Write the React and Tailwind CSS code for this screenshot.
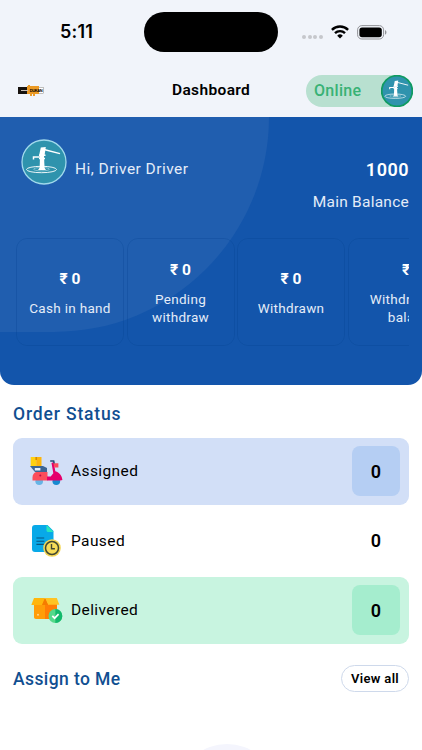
import React from 'react';

const stats = [
  { label: 'Cash in hand', width: 'w-[108px]' },
  { label: 'Pending withdraw', width: 'w-[108px]' },
  { label: 'Withdrawn', width: 'w-[108px]' },
  { label: 'Withdrawable balance', width: 'w-[130px]' },
];

const PumpAvatar = ({ className, stroke, strokeWidth }) => (
  <svg className={className} viewBox="0 0 46 46" fill="none">
    <circle cx="23" cy="23" r="22" fill="#2f93ad" stroke={stroke} strokeWidth={strokeWidth} />
    <ellipse cx="20.5" cy="30.5" rx="15" ry="3.2" stroke="#fff" strokeWidth="0.9" />
    <ellipse cx="20.5" cy="30.2" rx="8" ry="1.7" stroke="#d3edf2" strokeWidth="0.5" />
    <path d="M19 17h4l.6 13h-5z" fill="#fff" />
    <path d="M17 31h8l-1.5-2h-5z" fill="#fff" />
    <path d="M19.8 8.5 24.8 8l-1.2 8h-5.4z" fill="#fff" />
    <path d="M18 16.3h6.5M18 19.5h6" stroke="#fff" strokeWidth="1.4" />
    <path d="M19 18h-6.5v2.5" stroke="#fff" strokeWidth="1.5" />
    <path d="m23 10.5 16 4.2" stroke="#fff" strokeWidth="1.3" />
  </svg>
);

const ScooterIcon = () => (
  <svg className="h-[30px] w-[33px]" viewBox="0 0 33 30">
    <circle cx="9.2" cy="25.2" r="3.8" fill="#66b4e5" />
    <circle cx="26.3" cy="25.2" r="3.8" fill="#168ad1" />
    <rect x="0.7" y="1" width="5.5" height="9.5" fill="#ffd012" />
    <rect x="6.2" y="1" width="5.3" height="9.5" fill="#fdb50b" />
    <path d="M5.4 1h1.6v3H5.4z" fill="#d58b00" />
    <path d="M0 10h13l4 2v4H5z" fill="#3c6595" />
    <rect x="4.8" y="12" width="5.6" height="2.5" fill="#e5effb" />
    <path d="M6 16h11.5v8.5H2.5v-3c0-2.8 1.5-4.6 3.5-5.5z" fill="#fb4d5b" />
    <path d="m21.5 7 2.2-1 1.6 9.2c4.2 1.2 6.8 4.6 7.1 8.8l-2 .6H17v-4.2h3.7l2.6-3.2z" fill="#e5006b" />
    <path d="M20.2 5.1h3.5l.6 3.1" fill="none" stroke="#254b75" strokeWidth="1.5" />
    <path d="M23.4 7.2h5v4.3h-4z" fill="#fc495c" />
    <circle cx="10.3" cy="19.5" r="1" fill="#b90b49" />
  </svg>
);

const PausedIcon = () => (
  <svg className="ml-[1.5px] h-[33px] w-[30px]" viewBox="0 0 30 33">
    <path d="M3 1h12.5l6 6v21H3c-2 0-3-1-3-3V4c0-2 1-3 3-3z" fill="#08a9e8" />
    <path d="M14.5 1 21.5 8h-5c-1.4 0-2-.6-2-2z" fill="#29e7bc" />
    <path d="M4.4 14h7.8M4.4 17.2h8M4.4 20.4h7.6" stroke="#075681" strokeWidth="1.1" />
    <circle cx="20" cy="24" r="8.8" fill="#f4d653" />
    <circle cx="20" cy="24" r="6.5" fill="#f7dc58" stroke="#424832" strokeWidth="1.5" />
    <path d="M19.5 20v4.7h3.4" fill="none" stroke="#424832" strokeWidth="1.4" />
  </svg>
);

const DeliveredIcon = () => (
  <svg className="ml-px h-[27px] w-[32px]" viewBox="0 0 32 27">
    <path d="M3 2h11v20H5c-1.3 0-2-.7-2-2z" fill="#ff9d08" />
    <path d="M14 2h12v20H14z" fill="#ff7d05" />
    <path d="M3 1h11l-3 7H.3z" fill="#ffb60c" />
    <path d="M14 1h11.8l2.6 6.8H17z" fill="#ffc323" />
    <path d="m14 1-3 7h3zM14 1l3 7h-3z" fill="#f57c00" />
    <circle cx="7" cy="17.7" r="1" fill="#ffd78b" />
    <circle cx="24.4" cy="19" r="6.9" fill="#54d98a" />
    <path d="M24.4 12.1a6.9 6.9 0 0 1 0 13.8z" fill="#13b96c" />
    <path d="m21.3 18.8 2.3 2.4 4-4.1" fill="none" stroke="#fff" strokeWidth="1.7" />
  </svg>
);

const orders = [
  { label: 'Assigned', Icon: ScooterIcon, row: 'bg-[#d2dff7]', badge: 'bg-[#b5cef3]' },
  { label: 'Paused', Icon: PausedIcon, row: '', badge: '' },
  { label: 'Delivered', Icon: DeliveredIcon, row: 'bg-[#c8f4e0]', badge: 'bg-[#a5edce]' },
];

const StatusBar = () => (
  <div className="flex h-16 pt-3">
    <div className="w-[144px] pt-[7px] pl-[60px] font-[Inter] text-[18px] leading-[26px] font-semibold tracking-[0.2px]">5:11</div>
    <div className="h-10 w-[134px] rounded-full bg-black" />
    <div className="flex h-10 items-center pl-[24px]">
      <div className="mt-[9px] flex gap-[1.7px]">
        {[0, 1, 2, 3].map((i) => (
          <span key={i} className="size-1 rounded-full bg-[#c6c7cb]" />
        ))}
      </div>
      <svg className="ml-[8px] h-[14px] w-[18px]" viewBox="0 0 18 14" fill="none" stroke="#000" strokeWidth="2.4">
        <path d="M.9 4.9a11.5 11.5 0 0 1 16.2 0M4 8.2a7.1 7.1 0 0 1 10 0" />
        <path d="m9 13.5-2.8-2.8a4 4 0 0 1 5.6 0z" fill="#000" stroke="none" />
      </svg>
      <svg className="ml-[8px] h-[15px] w-[30px]" viewBox="0 0 30 15">
        <rect x=".6" y=".6" width="26" height="13.4" rx="4.2" fill="none" stroke="#929398" />
        <rect x="2.4" y="2.4" width="22.4" height="9.8" rx="2.6" />
        <path d="M28 5v4.7c2-.9 2-3.8 0-4.7" fill="#929398" />
      </svg>
    </div>
  </div>
);

const BrandLogo = () => (
  <svg className="h-[12px] w-[26px]" viewBox="0 0 26 12">
    <rect y="2" width="12" height="7" fill="#17120e" />
    <rect x="12" y="2.3" width="13.5" height="6.4" fill="#fff" stroke="#85827e" strokeWidth=".5" />
    <path d="M9 1h1V0h2v1h9v8h-4v2h-2V9h-1v2h-2V9h-3z" fill="#eb9a25" />
    <path d="M3 5.5h7" stroke="#c7bdb3" strokeWidth="1" />
    <text x="11.7" y="7" textLength="13" fontSize="4" fontWeight="bold" fontFamily="Liberation Sans">DUKAN</text>
  </svg>
);

export default function App() {
  return (
    <div className="h-[750px] w-full overflow-hidden bg-white font-[Roboto,sans-serif] text-black">
      <header className="h-[117px] bg-[#f1f4fa]">
        <StatusBar />
        <div className="grid h-[53px] grid-cols-[1fr_78px_1fr] items-center">
          <div className="pl-[18px]"><BrandLogo /></div>
          <h1 className="pt-px text-[15.5px] font-semibold tracking-[0.35px] whitespace-nowrap">Dashboard</h1>
          <div className="mr-[9px] flex h-8 w-[107px] items-center justify-between justify-self-end rounded-full bg-[#b8e0d0] pl-[8px]">
            <span className="pt-px text-[16px] font-medium tracking-[0.3px] text-[#38b275]">Online</span>
            <PumpAvatar className="size-8" stroke="#109b62" strokeWidth="2.6" />
          </div>
        </div>
      </header>

      <section className="relative h-[268px] overflow-hidden rounded-b-[14px] bg-[#1355ab] text-white">
        <div className="absolute top-0 left-0 h-[215px] w-[269px] rounded-br-[215px] bg-[#205eaf]" />
        <div className="relative flex h-[121px] justify-between pr-[13px] pl-[21px]">
          <div className="flex pt-[22px]">
            <PumpAvatar className="size-[46px]" stroke="#a0d9eb" strokeWidth="1.3" />
            <p className="mt-[19px] ml-[8px] text-[15.5px] leading-[22px] tracking-[0.45px] whitespace-nowrap text-[#e4ecf8]">Hi, Driver Driver</p>
          </div>
          <div className="pt-[41px] text-right">
            <p className="text-[18px] leading-6 font-semibold tracking-[0.5px]">1000</p>
            <p className="mt-[9px] text-[15.5px] leading-[22px] tracking-[0.25px] text-[#e4ecf8]">Main Balance</p>
          </div>
        </div>
        <div className="relative mr-[13px] ml-[16px] flex gap-[2.5px] overflow-hidden">
          {stats.map(({ label, width }) => (
            <div key={label} className={`flex h-[108px] shrink-0 flex-col items-center justify-center rounded-[11px] border-[1.5px] border-[#003a8c]/25 px-[10px] text-center ${width}`}>
              <p className="text-[15.5px] leading-[22px] font-bold">₹ 0</p>
              <p className="mt-[9px] text-[13.5px] leading-[18px] tracking-[0.3px] text-[#e4ecf8]">{label}</p>
            </div>
          ))}
        </div>
      </section>

      <main className="px-[13px]">
        <h2 className="pt-[17px] text-[17.5px] leading-6 font-medium tracking-[0.85px] text-[#114f91]">Order Status</h2>
        <div className="mt-3 flex flex-col gap-[3px]">
          {orders.map(({ label, Icon, row, badge }) => (
            <div key={label} className={`flex h-[66.5px] items-center rounded-[9px] pr-[9px] pl-[17px] ${row}`}>
              <div className="flex w-[41px] items-center"><Icon /></div>
              <span className="flex-1 pt-px text-[15.5px] tracking-[0.4px]">{label}</span>
              <span className={`flex h-[50px] w-12 items-center justify-center rounded-lg text-[18px] font-semibold ${badge}`}>0</span>
            </div>
          ))}
        </div>
        <div className="mt-[21px] flex items-center justify-between">
          <h2 className="pt-px text-[17.5px] leading-6 font-medium tracking-[0.4px] text-[#114f91]">Assign to Me</h2>
          <button className="h-[27px] w-[68px] rounded-full border border-[#ced9eb] pt-px text-[13px] font-semibold tracking-[0.35px] whitespace-nowrap">View all</button>
        </div>
        <div className="mt-[52px] ml-[169px] h-[80px] w-[90px] rounded-[50%] bg-[#f4f5fd]" />
      </main>
    </div>
  );
}
